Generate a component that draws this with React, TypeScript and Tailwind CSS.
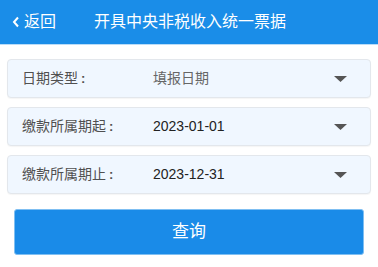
import React from 'react';

const rows = [
  { label: '日期类型', value: '填报日期', muted: true },
  { label: '缴款所属期起', value: '2023-01-01', muted: false },
  { label: '缴款所属期止', value: '2023-12-31', muted: false },
];

export default function App() {
  return (
    <div
      className="w-[378px] h-[267px] bg-white"
      style={{ fontFamily: '"Liberation Sans", "Noto Sans CJK SC", sans-serif' }}
    >
      <div className="h-[45px] bg-[#1a8de8] border-b border-[#b9dcf8] flex items-center relative">
        <div className="flex items-center pl-[12px] text-white text-[16px]">
          <svg width="8" height="12" viewBox="0 0 8 12" className="mr-[4px]">
            <path d="M6 1.5 L2 6 L6 10.5" fill="none" stroke="white" strokeWidth="2" />
          </svg>
          <span>返回</span>
        </div>
        <div className="absolute left-0 right-0 text-center text-white text-[16px] pointer-events-none pl-[2px]">
          开具中央非税收入统一票据
        </div>
      </div>

      <div className="px-[7px] pt-[14px] flex flex-col gap-[9px]">
        {rows.map((r) => (
          <div
            key={r.label}
            className="h-[39px] rounded-[4px] border border-[#e3e7ec] bg-[#f0f7ff] flex items-center pl-[14px] pr-[23px] shadow-[0_1px_1px_rgba(0,0,0,0.04)]"
          >
            <div className="w-[131px] text-[14px] text-[#505050] flex items-center">
              <span>{r.label}</span>
              <span className="ml-[3px] font-bold text-[13px]">:</span>
            </div>
            <div className={`flex-1 text-[14px] ${r.muted ? 'text-[#666666]' : 'text-[#222222]'}`}>
              {r.value}
            </div>
            <svg width="13" height="6" viewBox="0 0 13 6">
              <path d="M0 0 L13 0 L6.5 6 Z" fill="#555555" />
            </svg>
          </div>
        ))}
      </div>

      <div className="px-[14px] pt-[15px]">
        <button className="w-full h-[46px] rounded-[3px] bg-[#1a8be8] border border-[#7fbff2] text-white text-[17px]">
          查询
        </button>
      </div>
    </div>
  );
}
